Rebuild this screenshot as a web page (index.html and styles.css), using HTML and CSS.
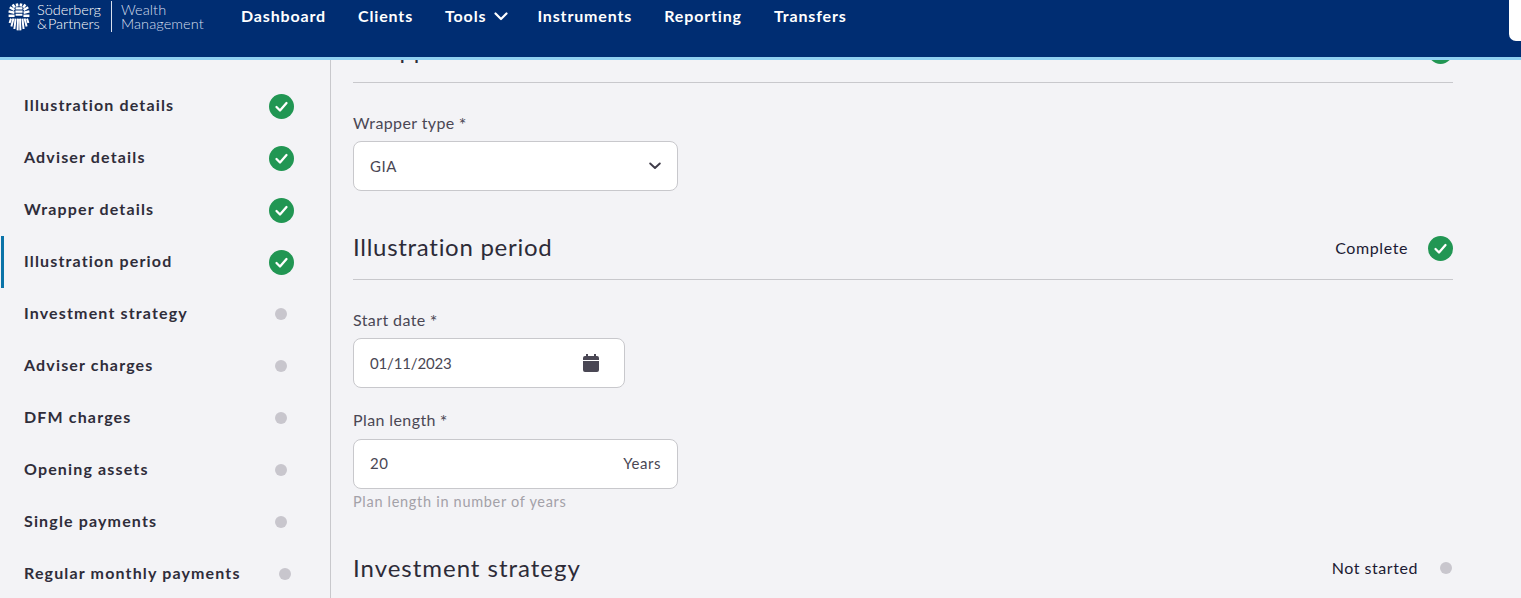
FILE: index.html
```html
<!DOCTYPE html>
<html lang="en">
<head>
<meta charset="utf-8">
<title>Illustration period</title>
<link rel="stylesheet" href="styles.css">
</head>
<body>
<header class="topbar">
  <div class="brand">
    <svg class="brand-mark" viewBox="0 0 22 28" width="22" height="28" aria-hidden="true">
      <g fill="none" stroke="#fff" stroke-linecap="butt">
        <g stroke-width="2.5">
          <path d="M9.4 3.4 L8.8 0.6"/><path d="M12.6 3.4 L13.2 0.6"/>
          <path d="M6.8 4.4 L4.6 1.6"/><path d="M15.2 4.4 L17.4 1.6"/>
          <path d="M6.4 7 L1.8 4.2"/><path d="M15.6 7 L20.2 4.2"/>
          <path d="M6.4 9.8 L0.6 8.4"/><path d="M15.6 9.8 L21.4 8.4"/>
          <path d="M6.6 12.8 L0.6 12.8"/><path d="M15.4 12.8 L21.4 12.8"/>
        </g>
        <path d="M7.6 5.4 H14.4 M7.4 8.6 H14.6 M7.6 11.8 H14.4" stroke-width="2.1"/>
        <g stroke-width="2">
          <path d="M10 15.6 L9.6 27.4"/><path d="M12 15.6 L12.4 27.4"/>
          <path d="M7.6 15.6 L6.4 26"/><path d="M14.4 15.6 L15.6 26"/>
          <path d="M5.4 15.6 L3.4 23.6"/><path d="M16.6 15.6 L18.6 23.6"/>
          <path d="M3 15.6 L1.6 20"/><path d="M19 15.6 L20.4 20"/>
        </g>
      </g>
    </svg>
    <div class="brand-name"><span>Söderberg</span><span>&amp;&#8202;Partners</span></div>
    <div class="brand-sub"><span>Wealth</span><span>Management</span></div>
  </div>
  <nav class="mainnav">
    <a>Dashboard</a>
    <a>Clients</a>
    <a class="has-caret">Tools
      <svg viewBox="0 0 14 9" width="14" height="9" aria-hidden="true"><path d="M1.5 1.5 L7 7 L12.5 1.5" fill="none" stroke="#fff" stroke-width="2.2" stroke-linecap="round" stroke-linejoin="round"/></svg>
    </a>
    <a>Instruments</a>
    <a>Reporting</a>
    <a>Transfers</a>
  </nav>
  <div class="topbar-search"></div>
</header>

<div class="workspace">
  <aside class="steps">
    <div class="step"><span>Illustration details</span><i class="tick"><svg viewBox="0 0 25 25"><path d="M7.5 13 L11 16.5 L17.5 9" /></svg></i></div>
    <div class="step"><span>Adviser details</span><i class="tick"><svg viewBox="0 0 25 25"><path d="M7.5 13 L11 16.5 L17.5 9" /></svg></i></div>
    <div class="step"><span>Wrapper details</span><i class="tick"><svg viewBox="0 0 25 25"><path d="M7.5 13 L11 16.5 L17.5 9" /></svg></i></div>
    <div class="step step-active"><span>Illustration period</span><i class="tick"><svg viewBox="0 0 25 25"><path d="M7.5 13 L11 16.5 L17.5 9" /></svg></i></div>
    <div class="step"><span>Investment strategy</span><i class="pending"></i></div>
    <div class="step"><span>Adviser charges</span><i class="pending"></i></div>
    <div class="step"><span>DFM charges</span><i class="pending"></i></div>
    <div class="step"><span>Opening assets</span><i class="pending"></i></div>
    <div class="step"><span>Single payments</span><i class="pending"></i></div>
    <div class="step step-wide"><span>Regular monthly payments</span><i class="pending"></i></div>
  </aside>

  <main class="content">
    <section class="section section-clipped">
      <div class="section-head">
        <h2>Wrapper details</h2>
        <div class="status"><span>Complete</span><i class="tick"><svg viewBox="0 0 25 25"><path d="M7.5 13 L11 16.5 L17.5 9" /></svg></i></div>
      </div>
      <div class="field">
        <label>Wrapper type<em>*</em></label>
        <div class="control control-wide">
          <span>GIA</span>
          <svg class="chev" viewBox="0 0 12 8" width="12" height="8" aria-hidden="true"><path d="M1.2 1.5 L6 6 L10.8 1.5" fill="none" stroke="#3f3c49" stroke-width="1.9" stroke-linecap="round" stroke-linejoin="round"/></svg>
        </div>
      </div>
    </section>

    <section class="section">
      <div class="section-head">
        <h2>Illustration period</h2>
        <div class="status"><span>Complete</span><i class="tick"><svg viewBox="0 0 25 25"><path d="M7.5 13 L11 16.5 L17.5 9" /></svg></i></div>
      </div>
      <div class="field">
        <label>Start date<em>*</em></label>
        <div class="control control-date">
          <span class="date-value">01/11/2023</span>
          <svg class="cal" viewBox="0 0 16 18" width="16" height="18" aria-hidden="true"><path fill="#4a4754" d="M3 0h2v2h6V0h2v2h1a2 2 0 0 1 2 2v2H0V4a2 2 0 0 1 2-2h1zM0 7h16v9a2 2 0 0 1-2 2H2a2 2 0 0 1-2-2z"/></svg>
        </div>
      </div>
      <div class="field field-next">
        <label>Plan length<em>*</em></label>
        <div class="control control-wide control-raised">
          <span>20</span>
          <span>Years</span>
        </div>
        <p class="hint">Plan length in number of years</p>
      </div>
    </section>

    <section class="section section-last">
      <div class="section-head">
        <h2>Investment strategy</h2>
        <div class="status status-pending"><span>Not started</span><i class="pending"></i></div>
      </div>
    </section>
  </main>
</div>
</body>
</html>
```

FILE: styles.css
```css
* { box-sizing: border-box; }
html, body { height: 100%; }
body {
  margin: 0;
  height: 598px;
  overflow: hidden;
  background: #f3f3f6;
  font-family: Lato, "Open Sans", sans-serif;
  color: #2d2b38;
  display: flex;
  flex-direction: column;
}

/* Top bar */
.topbar {
  position: relative;
  z-index: 2;
  flex: none;
  height: 60px;
  background: #002d72;
  border-bottom: 3px solid #8fd0f0;
  display: flex;
  align-items: flex-start;
  color: #fff;
}
.brand {
  width: 241px;
  flex: none;
  display: flex;
  align-items: flex-start;
  padding: 3px 0 0 8px;
}
.brand-mark { flex: none; }
.brand-name, .brand-sub {
  display: flex;
  flex-direction: column;
  font-size: 14.5px;
  font-weight: 300;
  line-height: 14px;
}
.brand-name { margin-left: 7px; padding-top: 2px; width: 75px; height: 31px; border-right: 1px solid #d7e0ee; margin-top: -2px; letter-spacing: -0.03px; }
.brand-sub { margin-left: 9px; color: #d5dfee; letter-spacing: 0.08px; }
.mainnav {
  display: flex;
  gap: 32px;
  padding-top: 6px;
  font-size: 16px;
  font-weight: 700;
  line-height: 20px;
  letter-spacing: 0.85px;
}
.mainnav a { display: flex; align-items: center; gap: 8px; }
.mainnav .has-caret { margin-right: -3px; }
.topbar-search {
  margin-left: auto;
  width: 12px;
  height: 41px;
  background: #fff;
  border-bottom-left-radius: 7px;
}

/* Body layout */
.workspace {
  flex: 1;
  min-height: 0;
  display: flex;
  overflow: hidden;
}
.steps {
  flex: none;
  width: 331px;
  padding-top: 20px;
  border-right: 1px solid #c8c8cc;
}
.step {
  height: 52px;
  display: flex;
  align-items: center;
  justify-content: space-between;
  padding: 0 36px 0 24px;
  font-size: 16px;
  font-weight: 700;
  letter-spacing: 1.15px;
  color: #2f2d3a;
  position: relative;
}
.step span { padding-bottom: 4px; }
.step-active::before {
  content: "";
  position: absolute;
  left: 1px;
  top: 0;
  bottom: 0;
  width: 3px;
  background: #0a73a8;
}
.step .pending { margin-right: 7px; }
.step-wide { padding-right: 32px; }
.step-wide .pending { margin-right: 7px; }
.tick {
  flex: none;
  display: block;
  width: 25px;
  height: 25px;
  border-radius: 50%;
  background: #219653;
}
.tick svg { display: block; width: 25px; height: 25px; fill: none; stroke: #fff; stroke-width: 2.3; stroke-linecap: round; stroke-linejoin: round; }
.pending {
  flex: none;
  display: block;
  width: 12px;
  height: 12px;
  border-radius: 50%;
  background: #c8c6cd;
}

/* Content */
.content {
  flex: 1;
  min-width: 0;
  padding: 0 68px 0 22px;
}
.section-clipped { margin-top: -29px; }
.section-head {
  height: 52px;
  border-bottom: 1px solid #c8c8cc;
  display: flex;
  align-items: center;
  justify-content: space-between;
  padding-bottom: 10px;
}
.section { padding-bottom: 37px; }
h2 {
  margin: 0;
  padding-bottom: 4px;
  font-size: 24px;
  font-weight: 400;
  letter-spacing: 0.72px;
  color: #2d2b38;
}
.status {
  display: flex;
  align-items: center;
  gap: 20px;
  font-size: 16px;
  letter-spacing: 0.6px;
  font-weight: 400;
  color: #1b1a33;
}
.status span { padding-bottom: 2px; }
.status-pending { gap: 22px; padding-right: 1px; letter-spacing: 0.55px; }
.field { padding-top: 29px; }
.field-next { padding-top: 21px; }
label {
  display: block;
  font-size: 16px;
  line-height: 22px;
  letter-spacing: 0.4px;
  color: #4a4754;
  margin-bottom: 7px;
}
.field-next label { margin-bottom: 8px; }
label em { font-style: normal; margin-left: 4px; font-size: 18px; line-height: 16px; vertical-align: -2px; }
.control {
  height: 50px;
  background: #fff;
  border: 1px solid #c8c8cc;
  border-radius: 8px;
  display: flex;
  align-items: center;
  justify-content: space-between;
  padding: 0 16px;
  font-size: 15px;
  letter-spacing: 0.55px;
  color: #4a4754;
}
.control-wide { width: 325px; }
.control-raised { padding-bottom: 2px; }
.control-date { width: 272px; padding-right: 25px; }
.date-value { letter-spacing: -0.15px; }
.hint {
  margin: 4px 0 0;
  font-size: 14.5px;
  line-height: 18px;
  letter-spacing: 0.7px;
  color: #a3a1a8;
}
.section-last { padding-bottom: 0; margin-top: -1px; }
.section-last .section-head { border-bottom: 0; }
.section-last h2 { padding-bottom: 2px; letter-spacing: 0.98px; }
```
